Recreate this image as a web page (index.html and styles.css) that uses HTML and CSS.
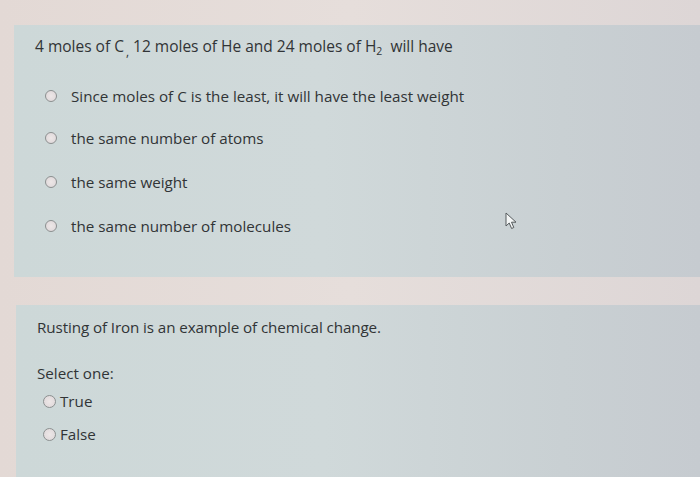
FILE: index.html
```html
<!DOCTYPE html>
<html>
<head>
<meta charset="utf-8">
<link rel="stylesheet" href="styles.css">
</head>
<body>
<div class="page">
  <section class="card card-one">
    <p class="question">4 moles of C<sub class="sub-comma">,</sub> 12 moles of He and 24 moles of H<sub class="sub">2</sub>&nbsp; will have</p>
    <ul class="options">
      <li class="option"><span class="radio"></span><span>Since moles of C is the least, it will have the least weight</span></li>
      <li class="option"><span class="radio"></span><span>the same number of atoms</span></li>
      <li class="option"><span class="radio"></span><span>the same weight</span></li>
      <li class="option"><span class="radio"></span><span>the same number of molecules</span></li>
    </ul>
    <svg class="cursor" width="14" height="18" viewBox="0 0 14 18">
      <path d="M1 1 L1 14 L4.2 11 L6.6 16.5 L8.8 15.5 L6.5 10.2 L11 10.2 Z" fill="#f4f6f6" stroke="#555a5c" stroke-width="1" stroke-linejoin="round"/>
    </svg>
  </section>
  <section class="card card-two">
    <p class="question q2">Rusting of Iron is an example of chemical change.</p>
    <p class="select">Select one:</p>
    <ul class="tf">
      <li class="tf-option"><span class="radio small"></span><span>True</span></li>
      <li class="tf-option"><span class="radio small"></span><span>False</span></li>
    </ul>
  </section>
</div>
</body>
</html>
```

FILE: styles.css
```css
html, body {
  margin: 0;
  padding: 0;
}
body {
  width: 700px;
  height: 477px;
  overflow: hidden;
  background: linear-gradient(90deg, #e3d9d5 0%, #e6dedb 50%, #ddd6d6 100%);
  font-family: "Open Sans", "Noto Sans", sans-serif;
  color: #313436;
}
.page {
  padding-top: 25px;
  display: flex;
  flex-direction: column;
  gap: 28px;
}
.card {
  position: relative;
  background: linear-gradient(90deg, #cdd8d8 0%, #d0d9da 45%, #c9d0d3 80%, #c6cbd0 100%);
  box-sizing: border-box;
}
.card-one {
  margin-left: 14px;
  height: 252px;
  padding: 11px 0 0 21px;
}
.card-two {
  margin-left: 16px;
  height: 175px;
  padding: 12px 0 0 21px;
}
.question {
  margin: 0;
  font-size: 15.5px;
  line-height: 20px;
}
.q2 {
  font-size: 15.2px;
  letter-spacing: -0.1px;
}
.sub {
  font-size: 10.5px;
  vertical-align: -3px;
  line-height: 0;
}
.sub-comma {
  font-size: 12px;
  vertical-align: -4px;
  line-height: 0;
  margin-left: 2px;
}
.options {
  list-style: none;
  margin: 30px 0 0 0;
  padding: 0 0 0 10px;
  display: flex;
  flex-direction: column;
  gap: 24px;
}
.option {
  display: flex;
  align-items: center;
  gap: 14px;
  font-size: 15.2px;
  line-height: 20px;
}
.option:nth-child(2) { margin-top: -2px; }
.radio {
  width: 10px;
  height: 10px;
  border-radius: 50%;
  border: 1.5px solid #8c9090;
  background: radial-gradient(circle, #ede7e7 0%, #ddd6d8 100%);
  flex: none;
}
.cursor {
  position: absolute;
  left: 491px;
  top: 187px;
}
.select {
  margin: 26px 0 0 0;
  font-size: 15.2px;
  line-height: 20px;
}
.tf {
  list-style: none;
  margin: 8px 0 0 0;
  padding: 0 0 0 6px;
  display: flex;
  flex-direction: column;
  gap: 13px;
}
.tf-option {
  display: flex;
  align-items: center;
  gap: 4px;
  font-size: 15.2px;
  line-height: 20px;
}
.radio.small {
  width: 11px;
  height: 11px;
}
```
